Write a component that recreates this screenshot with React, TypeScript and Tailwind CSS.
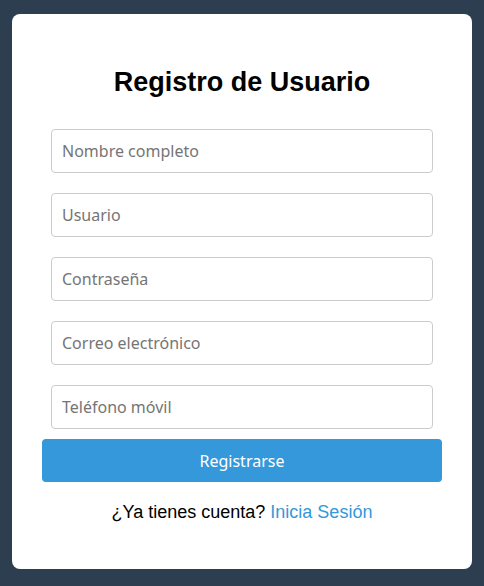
import { useState } from 'react';

const FIELDS = [
  { name: 'nombre', placeholder: 'Nombre completo', type: 'text' },
  { name: 'usuario', placeholder: 'Usuario', type: 'text' },
  { name: 'password', placeholder: 'Contraseña', type: 'password' },
  { name: 'correo', placeholder: 'Correo electrónico', type: 'email' },
  { name: 'telefono', placeholder: 'Teléfono móvil', type: 'tel' },
];

export default function App() {
  const [values, setValues] = useState<Record<string, string>>({});

  return (
    <div className="min-h-screen w-full bg-[#2c3e50] pt-[14px] pb-[17px]">
      <div className="mx-auto flex h-[555px] w-[460px] flex-col rounded-lg bg-white px-[30px] pt-[53px]">
        <h2 className="text-center font-['Liberation_Sans',Arial,sans-serif] text-[27px] leading-[31px] font-bold text-black">
          Registro de Usuario
        </h2>

        <form className="mt-[31px] flex flex-col" onSubmit={(e) => e.preventDefault()}>
          <div className="flex flex-col gap-[20px] px-[9px]">
            {FIELDS.map((f) => (
              <input
                key={f.name}
                type={f.type}
                placeholder={f.placeholder}
                value={values[f.name] ?? ''}
                onChange={(e) => setValues((prev) => ({ ...prev, [f.name]: e.target.value }))}
                className="h-[44px] w-full rounded border border-[#cccccc] px-[10px] font-['Noto_Sans',sans-serif] text-[16px] text-black outline-none placeholder:text-[#757575]"
              />
            ))}
          </div>
          <button
            type="submit"
            className="mt-[10px] h-[43px] w-full rounded bg-[#3498db] font-['Noto_Sans',sans-serif] text-[16px] text-white"
          >
            Registrarse
          </button>
        </form>

        <p className="mt-[17px] text-center font-['Liberation_Sans',Arial,sans-serif] text-[18px] text-black">
          ¿Ya tienes cuenta? <a href="#" className="text-[#3498db]">Inicia Sesión</a>
        </p>
      </div>
    </div>
  );
}
